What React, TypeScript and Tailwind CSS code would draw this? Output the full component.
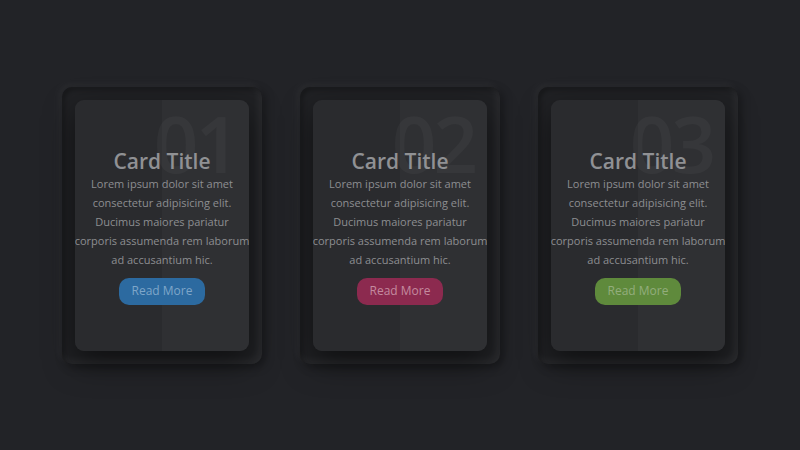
import React from 'react';

type Card = { num: string; btn: string; btnText: string };

const cards: Card[] = [
  { num: '01', btn: 'bg-[#2c6aa0]', btnText: 'text-[#7fa6c9]' },
  { num: '02', btn: 'bg-[#8c2a4f]', btnText: 'text-[#c48a9f]' },
  { num: '03', btn: 'bg-[#5f8a3c]', btnText: 'text-[#93ad7c]' },
];

const CardBox: React.FC<{ card: Card }> = ({ card }) => (
  <div className="w-[200px] h-[277px] rounded-[10px] p-[13px] bg-[#202124] shadow-[inset_3px_3px_4px_rgba(0,0,0,0.25),inset_-3px_-3px_9px_rgba(255,255,255,0.06),3px_3px_10px_rgba(0,0,0,0.35),-3px_-3px_10px_rgba(255,255,255,0.05)]">
    <div className="relative h-full rounded-[9px] overflow-hidden bg-[linear-gradient(to_right,#2a2b2e_50%,#2f3033_50%)] shadow-[0_12px_30px_rgba(0,0,0,0.5)] flex items-center justify-center">
      <div className="absolute top-[4px] right-[12px] text-[78px] leading-none font-semibold text-white/[0.035] tracking-[-3px]">
        {card.num}
      </div>
      <div className="relative flex flex-col items-center text-center pt-[2px]">
        <h3 className="text-[21px] leading-[26px] font-semibold text-[#909194]">Card Title</h3>
        <p className="text-[11px] leading-[19px] text-[#8d8e91] whitespace-nowrap">
          Lorem ipsum dolor sit amet
          <br />
          consectetur adipisicing elit.
          <br />
          Ducimus maiores pariatur
          <br />
          corporis assumenda rem laborum
          <br />
          ad accusantium hic.
        </p>
        <a className={`mt-[9px] h-[27px] px-[13px] rounded-[10px] flex items-center text-[12px] ${card.btn} ${card.btnText}`}>
          Read More
        </a>
      </div>
    </div>
  </div>
);

export default function App() {
  return (
    <div
      className="w-full h-[450px] bg-[#222327] flex items-center justify-center gap-[38px]"
      style={{ fontFamily: '"Open Sans", "DejaVu Sans", sans-serif' }}
    >
      {cards.map((c) => (
        <CardBox key={c.num} card={c} />
      ))}
    </div>
  );
}
